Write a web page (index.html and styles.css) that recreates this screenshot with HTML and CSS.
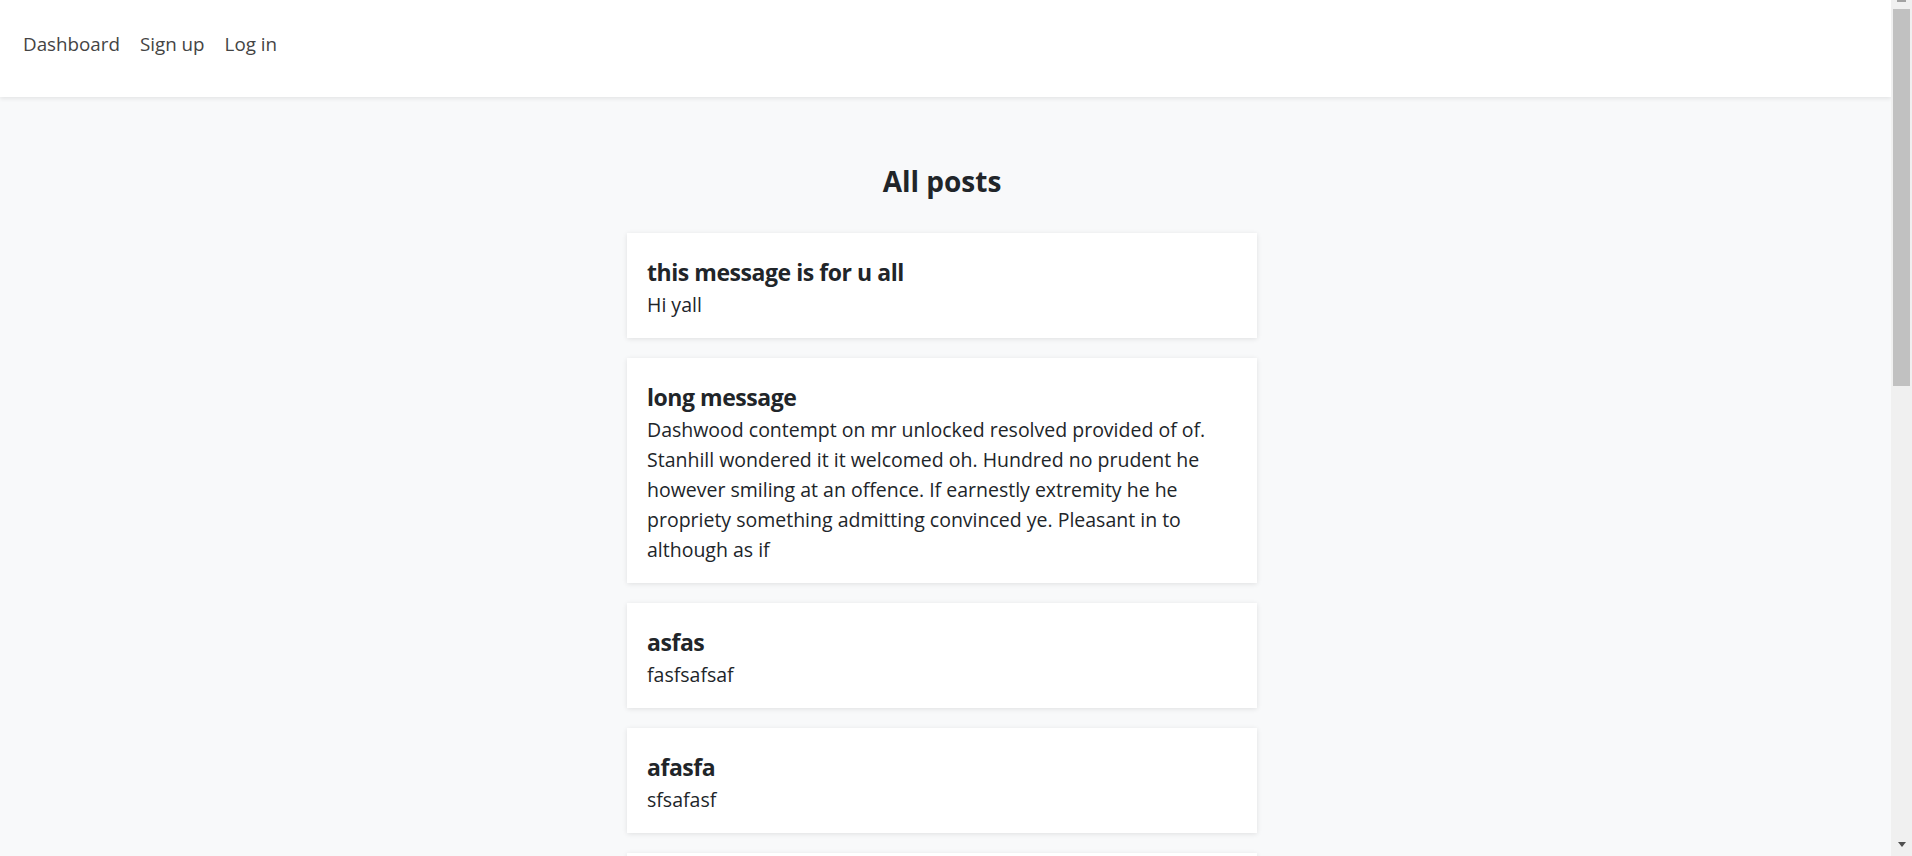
FILE: index.html
```html
<!DOCTYPE html>
<html lang="en">
<head>
<meta charset="utf-8">
<title>All posts</title>
<link rel="stylesheet" href="styles.css">
</head>
<body>
<div class="page">
  <nav class="navbar">
    <a class="nav-link" href="#">Dashboard</a>
    <a class="nav-link" href="#">Sign up</a>
    <a class="nav-link" href="#">Log in</a>
  </nav>
  <main class="main">
    <section class="posts">
      <h1 class="page-title">All posts</h1>
      <article class="card">
        <h2 class="card-title">this message is for u all</h2>
        <p class="card-text">Hi yall</p>
      </article>
      <article class="card">
        <h2 class="card-title">long message</h2>
        <p class="card-text">Dashwood contempt on mr unlocked resolved provided of of. Stanhill wondered it it welcomed oh. Hundred no prudent he however smiling at an offence. If earnestly extremity he he propriety something admitting convinced ye. Pleasant in to although as if</p>
      </article>
      <article class="card">
        <h2 class="card-title">asfas</h2>
        <p class="card-text">fasfsafsaf</p>
      </article>
      <article class="card">
        <h2 class="card-title">afasfa</h2>
        <p class="card-text">sfsafasf</p>
      </article>
      <article class="card card-empty"></article>
    </section>
  </main>
</div>
<div class="scrollbar" aria-hidden="true">
  <div class="sb-up"><span class="sb-up-arrow"></span></div>
  <div class="sb-thumb"></div>
  <div class="sb-track"></div>
  <div class="sb-down"><span class="sb-down-arrow"></span></div>
</div>
</body>
</html>
```

FILE: styles.css
```css
html,
body {
  height: 100%;
}

body {
  margin: 0;
  display: flex;
  overflow: hidden;
  font-family: "Open Sans", "Noto Sans", sans-serif;
  color: #212529;
  background: #f8f9fa;
}

.page {
  flex: 1;
  min-width: 0;
  height: 100%;
  overflow: hidden;
  background: #f8f9fa;
}

.navbar {
  display: flex;
  height: 97px;
  box-sizing: border-box;
  padding: 29px 13px 0;
  background: #fff;
  box-shadow: 0 2px 4px rgba(0, 0, 0, 0.08);
  position: relative;
}

.nav-link {
  padding: 0 10px;
  font-size: 18.8px;
  line-height: 30px;
  height: 30px;
  color: #444;
  text-decoration: none;
}

.main {
  padding: 0 7px 0 0;
}

.posts {
  width: 630px;
  margin: 0 auto;
}

.page-title {
  margin: 68px 0 34px;
  font-size: 28px;
  line-height: 33.6px;
  font-weight: 700;
  text-align: center;
}

.card {
  background: #fff;
  padding: 23px 20px 18px;
  margin-bottom: 20px;
  box-shadow: 0 1px 5px rgba(0, 0, 0, 0.1);
}

.card-empty {
  height: 64px;
}

.card-title {
  margin: 0 0 2px;
  font-size: 23px;
  letter-spacing: -0.45px;
  line-height: 32px;
  font-weight: 700;
}

.card-text {
  margin: 0;
  font-size: 19.5px;
  line-height: 30px;
}

/* drawn scrollbar */
.scrollbar {
  width: 21px;
  flex: none;
  height: 100%;
  display: flex;
  flex-direction: column;
  background: #f0f0f0;
}

.sb-up {
  height: 9px;
  display: flex;
  justify-content: center;
  align-items: flex-start;
}

.sb-up-arrow {
  width: 9px;
  height: 2px;
  background: #a3a3a3;
}

.sb-thumb {
  height: 377px;
  margin: 0 2px;
  background: #c1c1c1;
}

.sb-track {
  flex: 1;
}

.sb-down {
  height: 21px;
  display: flex;
  justify-content: center;
  padding-top: 7px;
  box-sizing: border-box;
}

.sb-down-arrow {
  width: 0;
  height: 0;
  border-left: 4.5px solid transparent;
  border-right: 4.5px solid transparent;
  border-top: 5px solid #505050;
}
```
